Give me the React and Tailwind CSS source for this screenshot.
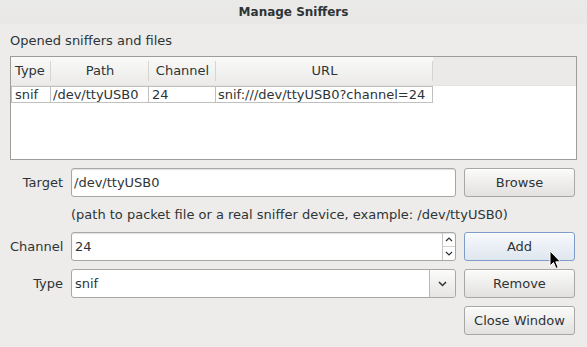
import React from "react";

const font = { fontFamily: '"DejaVu Sans", sans-serif' };

const Button = ({ children, active }) => (
  <button
    className={
      active
        ? "w-[111px] h-[29px] rounded-[3px] border border-[#7e9ccb] bg-gradient-to-b from-[#f7f9fc] to-[#dfe6ef] text-[13px] text-[#2e3436] shadow-[inset_0_1px_0_#ffffff]"
        : "w-[111px] h-[29px] rounded-[3px] border border-[#a7a7a5] bg-gradient-to-b from-[#fbfbfa] to-[#e2e1df] text-[13px] text-[#2e3436] shadow-[inset_0_1px_0_#ffffff]"
    }
  >
    {children}
  </button>
);

const Label = ({ children }) => (
  <div className="w-[53px] text-right text-[13px] text-[#2e3436]">{children}</div>
);

export default function App() {
  return (
    <div
      className="w-[587px] h-[347px] bg-[#edeceb] relative overflow-hidden flex flex-col"
      style={font}
    >
      {/* Title bar */}
      <div className="h-[24px] flex items-center justify-center bg-gradient-to-b from-[#eaeae9] to-[#e9e8e6] text-[12px] font-bold text-[#2e3436]">
        Manage Sniffers
      </div>

      <div className="pl-[10px] pr-[10px] pt-[8px] text-[13px] text-[#2e3436] leading-[17px]">
        Opened sniffers and files
      </div>

      {/* Table */}
      <div className="mx-[10px] mt-[7px] h-[104px] border border-[#9c9c9a] bg-white flex flex-col">
        <div className="h-[29px] flex bg-[#ebeae9] border-b border-[#e3e2e0] text-[13px] text-[#2e3436]">
          {[
            ["Type", "w-[40px] justify-start pl-[4px]"],
            ["Path", "w-[98px] justify-center"],
            ["Channel", "w-[67px] justify-center"],
            ["URL", "w-[217px] justify-center"],
          ].map(([t, c]) => (
            <div
              key={t}
              className={`${c} h-full flex items-center bg-gradient-to-b from-[#fafaf9] to-[#ebeae9] relative`}
            >
              {t}
              <div className="absolute right-0 top-[4px] bottom-[4px] w-px bg-[#d6d5d3]" />
            </div>
          ))}
        </div>
        <div className="flex h-[17px] text-[13px] text-[#2e3436] leading-[15px]">
          <div className="w-[40px] border border-[#c0c0be] pl-[3px]">snif</div>
          <div className="w-[98px] border border-l-0 border-[#c0c0be] pl-[2px]">/dev/ttyUSB0</div>
          <div className="w-[67px] border border-l-0 border-[#c0c0be] pl-[3px]">24</div>
          <div className="w-[217px] border border-l-0 border-[#c0c0be] pl-[2px]">
            snif:///dev/ttyUSB0?channel=24
          </div>
        </div>
      </div>

      {/* Form */}
      <div className="pl-[10px] pt-[8px] flex flex-col">
        <div className="flex items-center h-[29px] gap-[8px]">
          <Label>Target</Label>
          <div className="w-[385px] h-full rounded-[3px] border border-[#a7a7a5] bg-white flex items-center pl-[2px] text-[13px] text-[#2e3436] shadow-[inset_0_1px_1px_#e0e0e0]">
            /dev/ttyUSB0
          </div>
          <Button>Browse</Button>
        </div>

        <div className="h-[35px] pl-[61px] flex items-center text-[13px] text-[#2e3436]">
          (path to packet file or a real sniffer device, example: /dev/ttyUSB0)
        </div>

        <div className="flex items-center h-[29px] gap-[8px]">
          <Label>Channel</Label>
          <div className="w-[385px] h-full rounded-[3px] border border-[#a7a7a5] bg-white flex items-center text-[13px] text-[#2e3436] shadow-[inset_0_1px_1px_#e0e0e0]">
            <div className="flex-1 pl-[3px]">24</div>
            <div className="w-[13px] h-full border-l border-[#c4c4c2] flex flex-col">
              <div className="flex-1 flex items-center justify-center border-b border-[#d4d4d2]">
                <svg width="8" height="5" viewBox="0 0 8 5">
                  <path d="M1 4 L4 1 L7 4" fill="none" stroke="#2e3436" strokeWidth="1.2" />
                </svg>
              </div>
              <div className="flex-1 flex items-center justify-center">
                <svg width="8" height="5" viewBox="0 0 8 5">
                  <path d="M1 1 L4 4 L7 1" fill="none" stroke="#2e3436" strokeWidth="1.2" />
                </svg>
              </div>
            </div>
          </div>
          <Button active>Add</Button>
        </div>

        <div className="flex items-center h-[29px] gap-[8px] mt-[8px]">
          <Label>Type</Label>
          <div className="w-[385px] h-full rounded-[3px] border border-[#a7a7a5] bg-white flex items-center text-[13px] text-[#2e3436]">
            <div className="flex-1 pl-[3px]">snif</div>
            <div className="w-[26px] h-full border-l border-[#b8b8b6] bg-gradient-to-b from-[#fbfbfa] to-[#e6e5e3] rounded-r-[3px] flex items-center justify-center">
              <svg width="9" height="6" viewBox="0 0 9 6">
                <path d="M1 1 L4.5 4.5 L8 1" fill="none" stroke="#2e3436" strokeWidth="1.5" />
              </svg>
            </div>
          </div>
          <Button>Remove</Button>
        </div>

        <div className="flex justify-end h-[29px] mt-[8px] pr-[12px]">
          <Button>Close Window</Button>
        </div>
      </div>

      {/* Mouse pointer */}
      <svg
        className="absolute left-[549px] top-[250px]"
        width="13"
        height="20"
        viewBox="0 0 13 20"
      >
        <path
          d="M1 1 L1 16 L4.5 12.5 L7 18.5 L9.2 17.5 L6.8 11.8 L11.5 11.8 Z"
          fill="#000"
          stroke="#fff"
          strokeWidth="1"
        />
      </svg>
    </div>
  );
}
